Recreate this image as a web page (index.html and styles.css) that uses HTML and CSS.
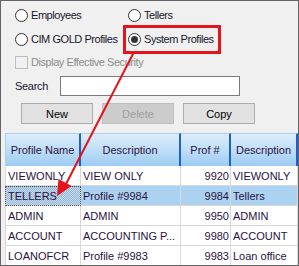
FILE: index.html
```
<!DOCTYPE html>
<html>
<head>
<meta charset="utf-8">
<link rel="stylesheet" href="styles.css">
</head>
<body>
<div class="win">
  <div class="opts">
    <div class="opt"><span class="radio"></span>Employees</div>
    <div class="opt"><span class="radio"></span>Tellers</div>
    <div class="opt"><span class="radio"></span>CIM GOLD Profiles</div>
    <div class="opt"><span class="radio on"></span>System Profiles</div>
  </div>
  <div class="chk-row"><span class="chk"></span>Display Effective Security</div>
  <div class="search-row"><span class="search-label">Search</span><span class="search-box"></span></div>
  <div class="btns"><span class="btn">New</span><span class="btn dis">Delete</span><span class="btn">Copy</span></div>
  <div class="grid">
    <div class="hd first">Profile Name</div>
    <div class="hd">Description</div>
    <div class="hd">Prof #</div>
    <div class="hd">Description</div>

    <div class="c first">VIEWONLY</div>
    <div class="c">VIEW ONLY</div>
    <div class="c num">9920</div>
    <div class="c">VIEWONLY</div>

    <div class="c first focus">TELLERS</div>
    <div class="c sel">Profile #9984</div>
    <div class="c num sel">9984</div>
    <div class="c sel">Tellers</div>

    <div class="c first">ADMIN</div>
    <div class="c">ADMIN</div>
    <div class="c num">9950</div>
    <div class="c">ADMIN</div>

    <div class="c first">ACCOUNT</div>
    <div class="c">ACCOUNTING P...</div>
    <div class="c num">9980</div>
    <div class="c">ACCOUNT</div>

    <div class="c first">LOANOFCR</div>
    <div class="c">Profile #9983</div>
    <div class="c num">9983</div>
    <div class="c">Loan office</div>
  </div>
  <div class="callout"></div>
  <svg class="arrow" width="299" height="266" viewBox="0 0 299 266">
    <line x1="134" y1="52" x2="66" y2="184" stroke="#e3141b" stroke-width="2"/>
    <polygon points="57,196 58.5,179 71.5,186" fill="#e3141b"/>
  </svg>
</div>
</body>
</html>
```
FILE: styles.css
```
body {
  margin: 0;
}

.win {
  position: relative;
  width: 299px;
  height: 266px;
  box-sizing: border-box;
  border: 1px solid #646464;
  background: #f0f0f0;
  overflow: hidden;
  font-family: "Liberation Sans", Arial, sans-serif;
  font-size: 11px;
  color: #16162c;
}

.opts {
  display: grid;
  grid-template-columns: 113px 1fr;
  grid-auto-rows: 24px;
  padding: 2px 0 0 14px;
}

.opt {
  display: flex;
  align-items: center;
  gap: 3px;
  letter-spacing: -0.45px;
}

.radio {
  width: 13px;
  height: 13px;
  box-sizing: border-box;
  border: 1px solid #333;
  border-radius: 50%;
  background: #fff;
  display: flex;
  align-items: center;
  justify-content: center;
}

.radio.on::after {
  content: "";
  width: 7px;
  height: 7px;
  border-radius: 50%;
  background: #333;
}

.chk-row {
  display: flex;
  align-items: center;
  gap: 3px;
  height: 22px;
  padding-left: 14px;
  color: #8d8d8d;
  letter-spacing: -0.45px;
}

.chk {
  width: 13px;
  height: 13px;
  box-sizing: border-box;
  border: 1px solid #bcbcbc;
  background: #f0f0f0;
}

.search-row {
  display: flex;
  align-items: center;
  height: 20px;
  margin-top: 3px;
  padding-left: 14px;
}

.search-label {
  width: 45px;
  letter-spacing: -0.3px;
}

.search-box {
  width: 180px;
  height: 20px;
  box-sizing: border-box;
  border: 1px solid #7a7a7a;
  background: #fff;
}

.btns {
  display: flex;
  gap: 9px;
  margin-top: 7px;
  padding-left: 20px;
}

.btn {
  width: 72px;
  height: 21px;
  box-sizing: border-box;
  border: 1px solid #adadad;
  background: #e1e1e1;
  display: flex;
  align-items: center;
  justify-content: center;
  color: #000;
}

.btn.dis {
  background: #cccccc;
  border-color: #bfbfbf;
  color: #a0a0a0;
}

.grid {
  display: grid;
  grid-template-columns: 76px 100px 50px 67px;
  grid-template-rows: 33px;
  grid-auto-rows: 20px;
  margin: 9px 0 0 4px;
  color: #2a1240;
}

.hd {
  box-sizing: border-box;
  border-top: 1px solid #a6d3f0;
  border-right: 2px solid #1f62c6;
  background: linear-gradient(#dcedfb, #bcdcf7 55%, #9ccbf2);
  display: flex;
  align-items: center;
  justify-content: center;
  white-space: nowrap;
}

.hd.first {
  border-left: 1px solid #a6d3f0;
}

.c {
  box-sizing: border-box;
  border-right: 1px solid #d8d8d8;
  border-bottom: 1px solid #d8d8d8;
  background: #fff;
  padding: 0 1px 0 2px;
  display: flex;
  align-items: center;
  white-space: nowrap;
  overflow: hidden;
}

.c.first {
  border-left: 1px solid #d8d8d8;
}

.c.num {
  justify-content: flex-end;
}

.c.sel {
  background: #acd2f2;
}

.c.focus {
  background: repeating-conic-gradient(#96b4d4 0 25%, #c6dcf0 0 50%) 0 0 / 2px 2px;
  outline: 1px dotted #555;
  outline-offset: -1px;
}

.callout {
  position: absolute;
  left: 122px;
  top: 24px;
  width: 98px;
  height: 29px;
  box-sizing: border-box;
  border: 3px solid #e3141b;
}

.arrow {
  position: absolute;
  left: -1px;
  top: -1px;
}
```
